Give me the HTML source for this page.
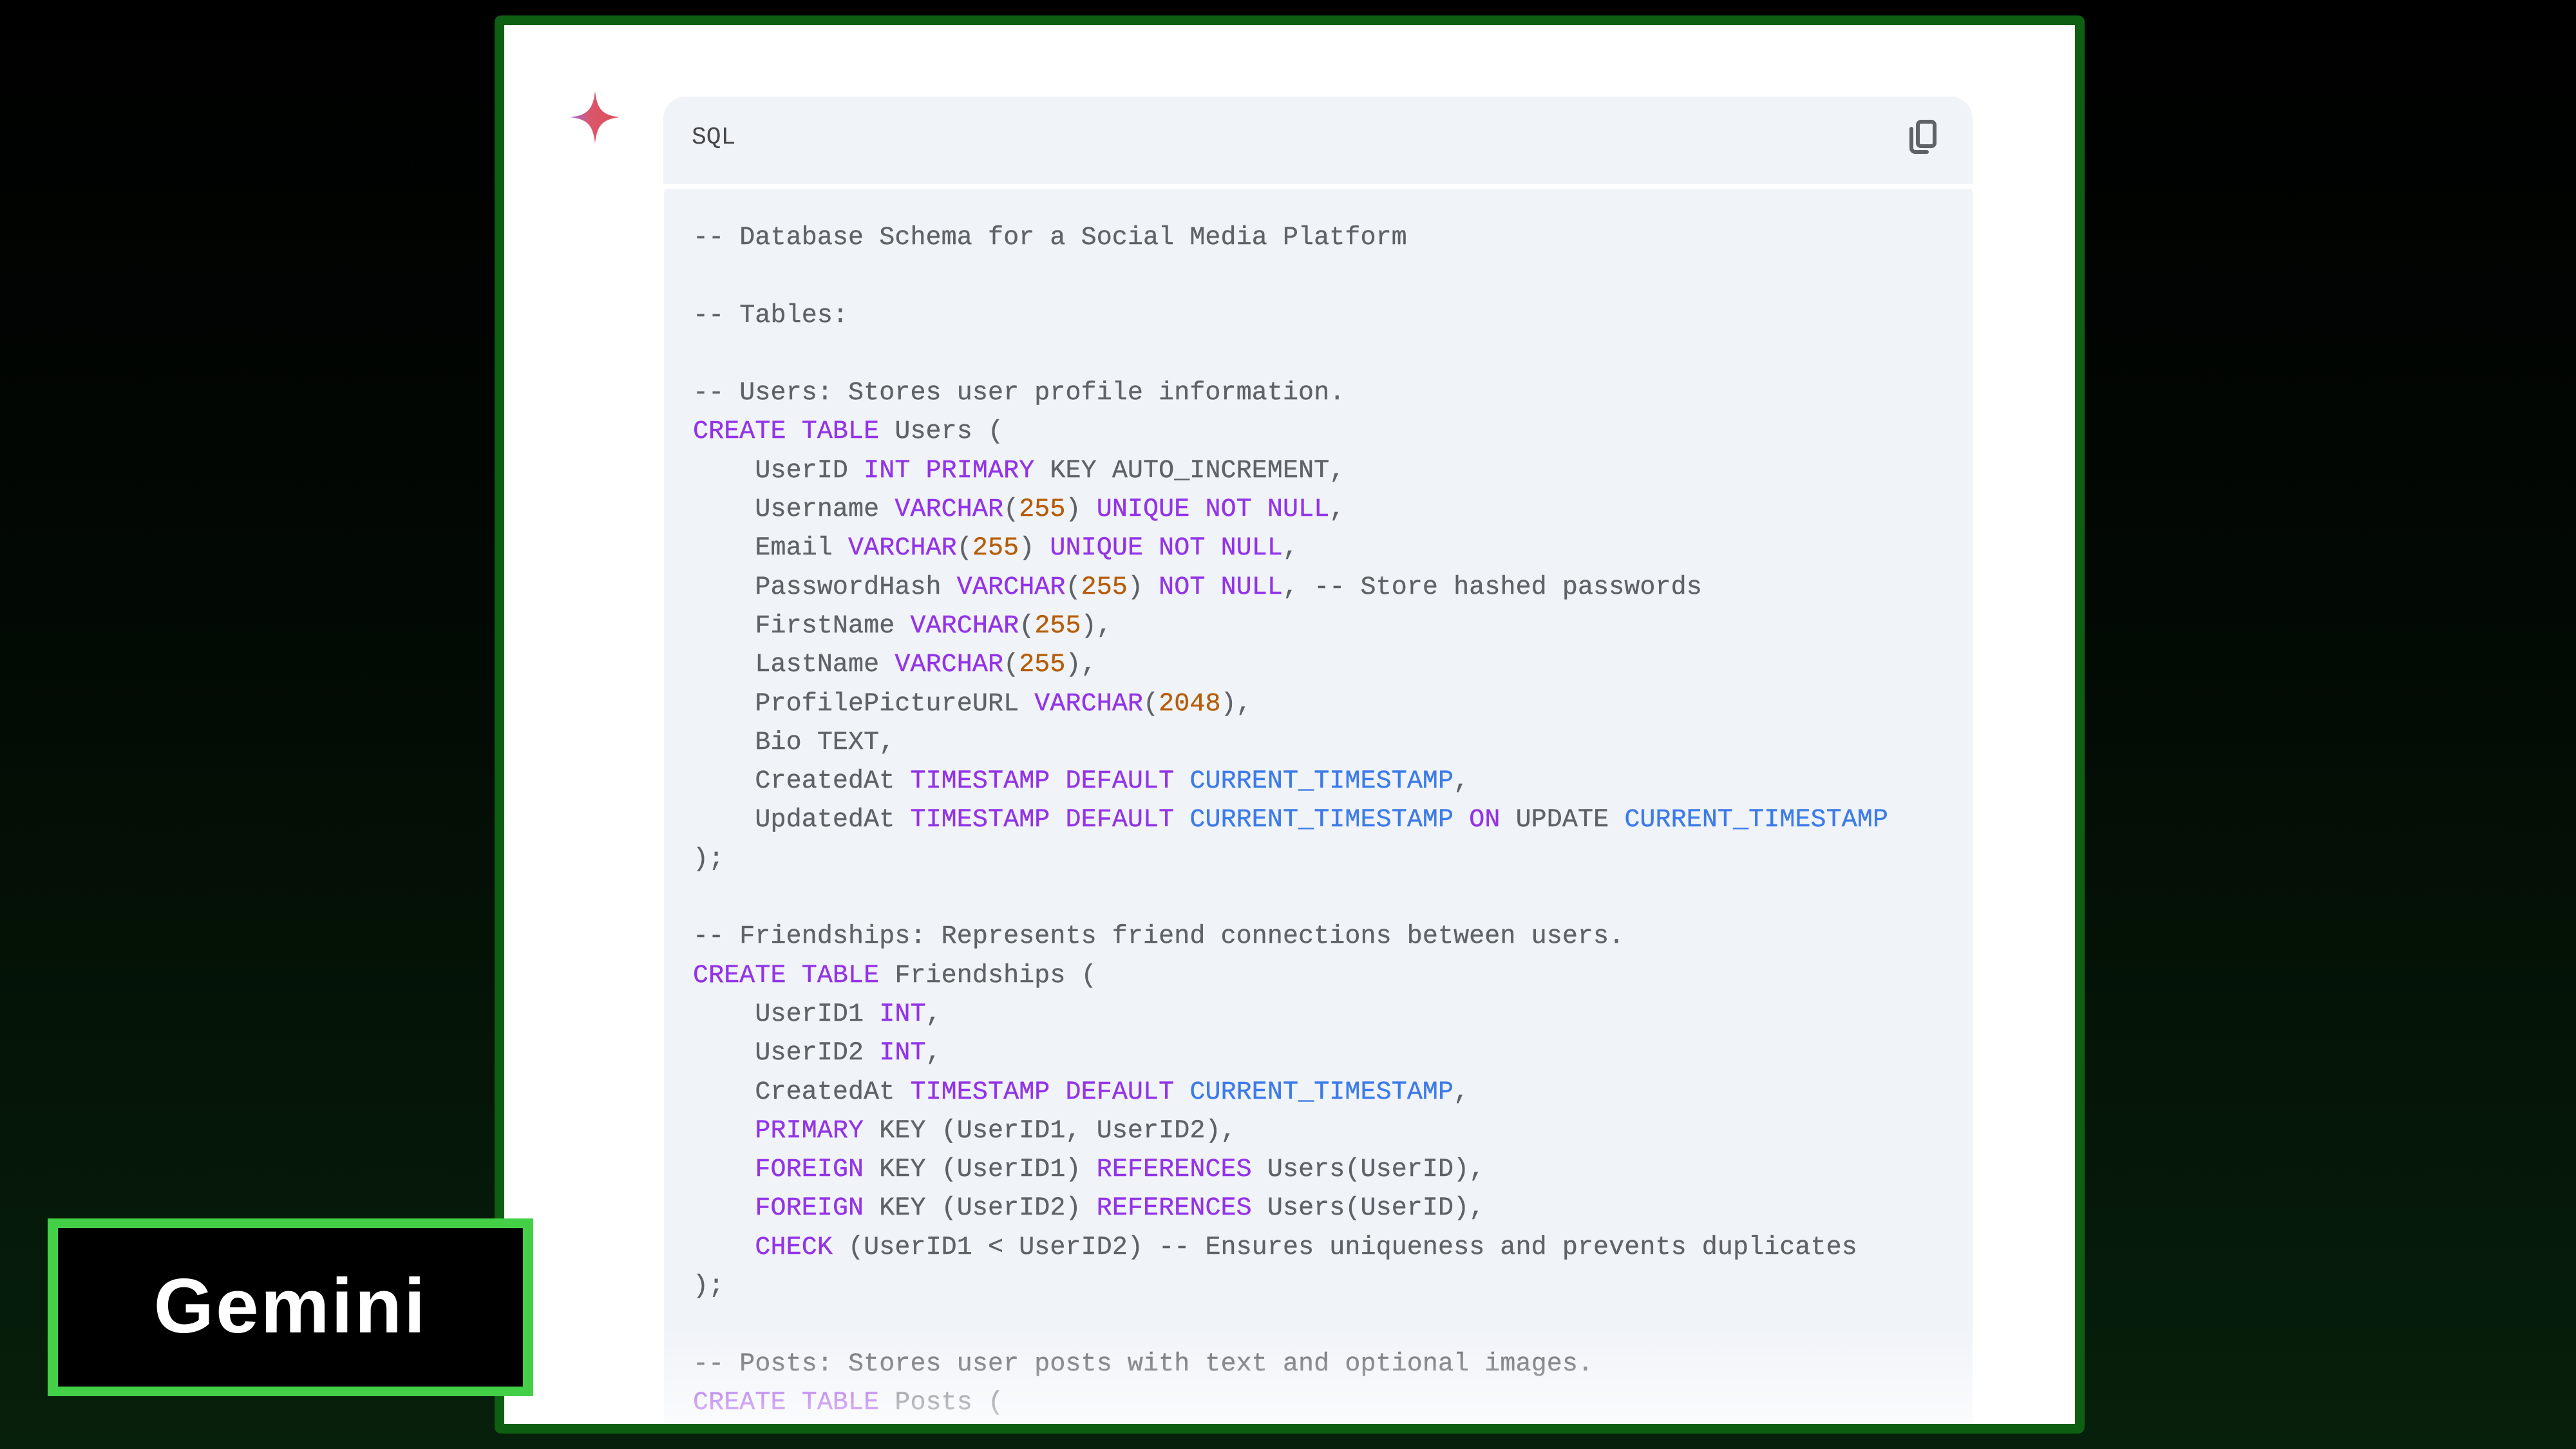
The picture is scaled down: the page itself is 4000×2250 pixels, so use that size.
<!DOCTYPE html>
<html><head><meta charset="utf-8"><style>
html,body{margin:0;padding:0}
body{width:4000px;height:2250px;overflow:hidden;position:relative;background:linear-gradient(180deg,#000 0%,#020803 40%,#07200b 100%);font-family:"Liberation Sans",sans-serif}
.frame{position:absolute;left:768px;top:24px;width:2439px;height:2172px;border:15px solid #0f5f12;border-radius:10px;background:#fff;overflow:hidden}
.star{position:absolute;left:102px;top:102px;width:78px;height:82px}
.hdr{position:absolute;left:247px;top:111px;width:2033px;height:136px;background:#f0f3f8;border-radius:34px 34px 0 0}
.hdr .t{position:absolute;left:44px;top:42px;font-family:"Liberation Mono",monospace;font-size:38px;color:#444746}
.copy{position:absolute;left:1932px;top:36px}
.body{position:absolute;left:248px;top:254px;width:2032px;height:1950px;background:#f0f3f8;border-radius:6px}
pre{margin:0;position:absolute;left:45px;top:47px;font-family:"Liberation Mono",monospace;font-size:40px;line-height:60.3px;color:#5f6368;letter-spacing:0.1px;-webkit-text-stroke:0.4px}
.k{color:#9334e6}.n{color:#b55d08}.b{color:#3d7be8}
.fade{position:absolute;left:0;right:0;bottom:0;height:150px;background:linear-gradient(rgba(255,255,255,0),rgba(255,255,255,0.7))}
.tag{position:absolute;left:74px;top:1892px;width:722px;height:246px;border:16px solid #43d047;border-width:15px 16px;background:#000}
.tag span{position:absolute;left:0;right:0;top:56px;text-align:center;color:#fff;font-weight:bold;font-size:120px;line-height:130px;letter-spacing:3px}
</style></head><body>
<div class="frame">
<svg class="star" viewBox="0 0 78 82"><defs><linearGradient id="g" x1="0" x2="1"><stop offset="0" stop-color="#9b6fd0"/><stop offset="0.4" stop-color="#d9566a"/><stop offset="1" stop-color="#e0505a"/></linearGradient></defs><path d="M39 0C42 28 50 38 78 41C50 44 42 54 39 82C36 54 28 44 0 41C28 38 36 28 39 0Z" fill="url(#g)"/></svg>
<div class="hdr"><div class="t">SQL</div>
<svg class="copy" width="48" height="54" viewBox="0 0 48 54"><rect x="16" y="3" width="26" height="38" rx="5" fill="none" stroke="#5f6368" stroke-width="6"/><path d="M6 14V44a6 6 0 0 0 6 6H30" fill="none" stroke="#5f6368" stroke-width="6" stroke-linecap="round"/></svg></div>
<div class="body">
<pre>-- Database Schema for a Social Media Platform

-- Tables:

-- Users: Stores user profile information.
<span class="k">CREATE TABLE</span> Users (
    UserID <span class="k">INT PRIMARY</span> KEY AUTO_INCREMENT,
    Username <span class="k">VARCHAR</span>(<span class="n">255</span>) <span class="k">UNIQUE NOT NULL</span>,
    Email <span class="k">VARCHAR</span>(<span class="n">255</span>) <span class="k">UNIQUE NOT NULL</span>,
    PasswordHash <span class="k">VARCHAR</span>(<span class="n">255</span>) <span class="k">NOT NULL</span>, -- Store hashed passwords
    FirstName <span class="k">VARCHAR</span>(<span class="n">255</span>),
    LastName <span class="k">VARCHAR</span>(<span class="n">255</span>),
    ProfilePictureURL <span class="k">VARCHAR</span>(<span class="n">2048</span>),
    Bio TEXT,
    CreatedAt <span class="k">TIMESTAMP DEFAULT</span> <span class="b">CURRENT_TIMESTAMP</span>,
    UpdatedAt <span class="k">TIMESTAMP DEFAULT</span> <span class="b">CURRENT_TIMESTAMP</span> <span class="k">ON</span> UPDATE <span class="b">CURRENT_TIMESTAMP</span>
);

-- Friendships: Represents friend connections between users.
<span class="k">CREATE TABLE</span> Friendships (
    UserID1 <span class="k">INT</span>,
    UserID2 <span class="k">INT</span>,
    CreatedAt <span class="k">TIMESTAMP DEFAULT</span> <span class="b">CURRENT_TIMESTAMP</span>,
    <span class="k">PRIMARY</span> KEY (UserID1, UserID2),
    <span class="k">FOREIGN</span> KEY (UserID1) <span class="k">REFERENCES</span> Users(UserID),
    <span class="k">FOREIGN</span> KEY (UserID2) <span class="k">REFERENCES</span> Users(UserID),
    <span class="k">CHECK</span> (UserID1 &lt; UserID2) -- Ensures uniqueness and prevents duplicates
);

-- Posts: Stores user posts with text and optional images.
<span class="k">CREATE TABLE</span> Posts (</pre>
</div>
<div class="fade"></div>
</div>
<div class="tag"><span>Gemini</span></div>
</body></html>
